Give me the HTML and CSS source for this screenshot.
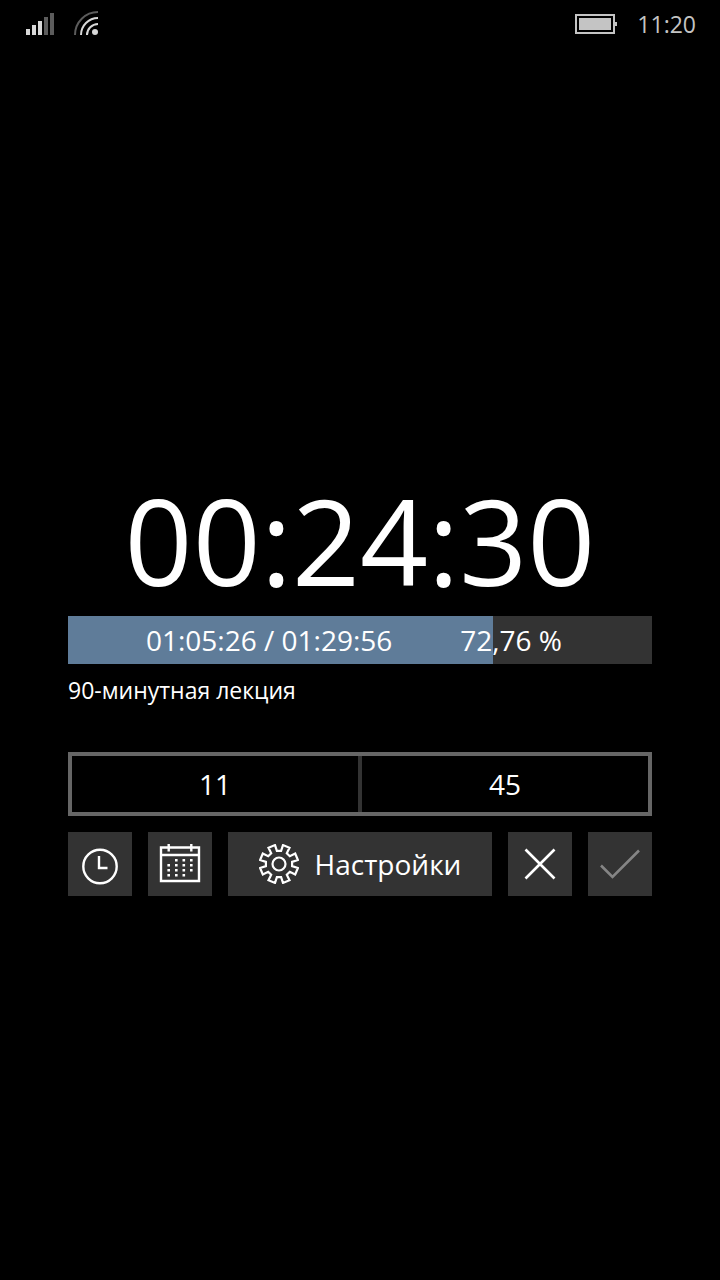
FILE: index.html
```html
<!DOCTYPE html>
<html lang="ru">
<head>
<meta charset="utf-8">
<meta name="viewport" content="width=device-width, initial-scale=1">
<title>Таймер</title>
<link rel="stylesheet" href="styles.css">
</head>
<body>
<header class="status">
  <div class="status-group">
    <svg class="signal" width="28" height="22" viewBox="0 0 28 22" aria-hidden="true">
      <path fill="#d8d8d8" d="M0 16h4v6H0zM6 12h4v10H6zM12 8h4v14h-4z"/>
      <path fill="#5c5c5c" d="M18 4h4v18h-4zM24 0h4v22h-4z"/>
    </svg>
    <svg class="wifi" width="25" height="26" viewBox="0 0 25 26" aria-hidden="true">
      <g fill="none" stroke-width="2">
        <path stroke="#5c5c5c" d="M1 24A23 23 0 0 1 24 1"/>
        <path stroke="#d8d8d8" d="M7 24A17 17 0 0 1 24 7M13 24A11 11 0 0 1 24 13"/>
      </g>
      <circle cx="21" cy="21" r="3" fill="#d8d8d8"/>
    </svg>
  </div>
  <div class="status-group">
    <svg class="battery" width="42" height="20" viewBox="0 0 42 20" aria-hidden="true">
      <path fill="none" stroke="#c4c4c4" stroke-width="2" d="M1 1h38v18H1z"/>
      <path fill="#c4c4c4" d="M4 4h32v12H4zM40 8h2v4h-2z"/>
    </svg>
    <time class="clock">11:20</time>
  </div>
</header>
<main class="timer">
  <h1 class="remaining">00:24:30</h1>
  <div class="progress" role="progressbar" aria-valuemin="0" aria-valuemax="100" aria-valuenow="72.76" aria-labelledby="lesson" style="--done: 72.76%">
    <span>01:05:26 / 01:29:56</span>
    <span>72,76 %</span>
  </div>
  <p class="lesson" id="lesson">90-минутная лекция</p>
  <button class="picker" type="button">
    <span class="picker-part">11</span>
    <span class="picker-part">45</span>
  </button>
  <div class="actions">
    <button class="action" type="button" aria-label="Время">
      <svg width="64" height="64" viewBox="0 0 64 64" fill="none" stroke="currentColor" stroke-width="2.4" aria-hidden="true">
        <circle cx="32" cy="34.500" r="16.700"/>
        <path d="M31 24v12h8.500"/>
      </svg>
    </button>
    <button class="action" type="button" aria-label="Календарь">
      <svg width="64" height="64" viewBox="0 0 64 64" fill="none" stroke="currentColor" stroke-width="2.4" aria-hidden="true">
        <path d="M13 15.500h38V49H13zM13 23h38M20.700 12v7.500M43.300 12v7.500"/>
        <path stroke-width="2.600" stroke-dasharray="2.600 2.400" d="M20.700 32v13M28.300 27v18M35.800 27v18M43.300 27v13"/>
      </svg>
    </button>
    <button class="action action-wide" type="button">
      <svg width="40" height="40" viewBox="-20 -20 40 40" fill="none" stroke="currentColor" stroke-width="2.2" aria-hidden="true">
        <path d="M-2.100-13.100h4.200L4-18.900 10.500-16.200 7.800-10.800 10.800-7.800 16.200-10.500 18.900-4 13.100-2.100v4.200L18.900 4 16.200 10.500 10.800 7.800 7.800 10.800 10.500 16.200 4 18.900 2.100 13.100h-4.200L-4 18.900-10.500 16.200-7.800 10.800-10.800 7.800-16.200 10.500-18.900 4-13.100 2.100v-4.200L-18.900-4-16.200-10.500-10.800-7.800-7.800-10.800-10.500-16.200-4-18.900z"/>
        <circle r="6.500"/>
      </svg>
      <span>Настройки</span>
    </button>
    <button class="action" type="button" aria-label="Отмена">
      <svg width="64" height="64" viewBox="0 0 64 64" fill="none" stroke="currentColor" stroke-width="2.600" aria-hidden="true">
        <path d="M17.500 17.500l29 29M46.500 17.500l-29 29"/>
      </svg>
    </button>
    <button class="action" type="button" aria-label="Готово" disabled>
      <svg width="64" height="64" viewBox="0 0 64 64" fill="none" stroke="currentColor" stroke-width="2.600" aria-hidden="true">
        <path d="M13 33.500l11.500 11.500L51 18.500"/>
      </svg>
    </button>
  </div>
</main>
</body>
</html>
```

FILE: styles.css
```css
* {
  box-sizing: border-box;
}

body {
  margin: 0;
  min-height: 100vh;
  display: flex;
  flex-direction: column;
  background: #000;
  color: #fff;
  font-family: "Open Sans", "Noto Sans", sans-serif;
  font-size: 28px;
}

button {
  margin: 0;
  padding: 0;
  border: 0;
  color: inherit;
  font: inherit;
}

svg {
  display: block;
  flex: none;
}

.status {
  display: flex;
  justify-content: space-between;
  height: 48px;
  padding: 0 24px 0 26px;
}

.status-group {
  display: flex;
  align-items: center;
  gap: 20px;
}

.clock {
  color: #c4c4c4;
  font-size: 23px;
}

.timer {
  flex: 1;
  display: flex;
  flex-direction: column;
  justify-content: center;
  padding: 38px 68px 0;
}

.remaining {
  margin: 0 0 6px;
  font-size: 119px;
  font-weight: 400;
  line-height: 140px;
  text-align: center;
  white-space: nowrap;
}

.progress {
  display: flex;
  align-items: center;
  justify-content: center;
  gap: 68px;
  height: 48px;
  padding-right: 12px;
  background: linear-gradient(to right, #5f7c99 var(--done), #333 var(--done));
}

.lesson {
  margin: 10px 0 46px;
  font-size: 23px;
  line-height: 32px;
}

.picker {
  display: grid;
  grid-template-columns: 1fr 1fr;
  gap: 4px;
  height: 64px;
  border: 4px solid #666;
  background: #333;
}

.picker-part {
  display: grid;
  place-items: center;
  background: #000;
}

.actions {
  display: flex;
  gap: 16px;
  margin-top: 16px;
}

.action {
  display: flex;
  align-items: center;
  justify-content: center;
  width: 64px;
  height: 64px;
  background: #333;
}

.action-wide {
  flex: 1;
  gap: 16px;
}

.action:disabled {
  color: #858585;
}
```
